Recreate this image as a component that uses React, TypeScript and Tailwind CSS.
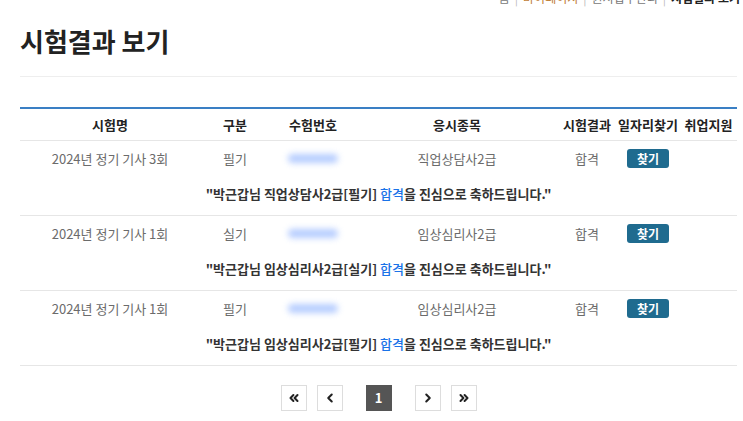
import React from 'react'
import { ChevronLeft, ChevronRight, ChevronsLeft, ChevronsRight } from 'lucide-react'

type Result = {
  round: string
  kind: string
  subject: string
  result: string
}

const results: Result[] = [
  { round: '2024년 정기 기사 3회', kind: '필기', subject: '직업상담사2급', result: '합격' },
  { round: '2024년 정기 기사 1회', kind: '실기', subject: '임상심리사2급', result: '합격' },
  { round: '2024년 정기 기사 1회', kind: '필기', subject: '임상심리사2급', result: '합격' },
]

const font = { fontFamily: '"Noto Sans CJK KR", "Noto Sans", sans-serif' }

function PageButton({ children, active }: { children: React.ReactNode; active?: boolean }) {
  return (
    <button
      className={`w-[26px] h-[26px] flex items-center justify-center text-[13px] font-bold ${
        active ? 'bg-[#555555] text-white' : 'bg-white border border-[#dddddd] text-[#222]'
      }`}
    >
      {children}
    </button>
  )
}

export default function App() {
  return (
    <div className="w-[743px] h-[421px] overflow-hidden bg-white pl-[20px] pr-[6px]" style={font}>
      {/* breadcrumb, cut off by the top edge */}
      <div className="flex justify-end -mt-[10px] h-[16px] text-[12px] leading-[16px] text-[#777] -mr-[3px]">
        <span>홈</span>
        <span className="mx-[5px] text-[#bbb]">|</span>
        <span className="text-[#c0803a]">마이페이지</span>
        <span className="mx-[5px] text-[#bbb]">|</span>
        <span>원서접수관리</span>
        <span className="mx-[5px] text-[#bbb]">|</span>
        <span className="text-[#222] font-bold">시험결과 보기</span>
      </div>

      <h1 className="mt-[18px] text-[26px] leading-[34px] font-bold text-[#222]">시험결과 보기</h1>

      <div className="mt-[18px] border-t border-[#eeeeee]" />

      <table className="mt-[30px] w-full table-fixed border-t-2 border-[#3a7fc4] text-[13px]">
        <colgroup>
          <col className="w-[180px]" />
          <col className="w-[70px]" />
          <col className="w-[86px]" />
          <col className="w-[202px]" />
          <col className="w-[58px]" />
          <col className="w-[64px]" />
          <col className="w-[57px]" />
        </colgroup>
        <thead>
          <tr className="h-[32px] border-b border-[#e6e6e6] text-[#222] font-bold">
            <th>시험명</th>
            <th>구분</th>
            <th>수험번호</th>
            <th>응시종목</th>
            <th className="whitespace-nowrap">시험결과</th>
            <th className="whitespace-nowrap">일자리찾기</th>
            <th className="whitespace-nowrap">취업지원</th>
          </tr>
        </thead>
        <tbody>
          {results.map((r, i) => (
            <React.Fragment key={i}>
              <tr className="h-[36px] text-[#6b6b6b] text-center">
                <td>{r.round}</td>
                <td>{r.kind}</td>
                <td>
                  <div className="mx-auto w-[50px] h-[9px] rounded-full bg-[#a3c0ff] blur-[3px] opacity-80" />
                </td>
                <td>{r.subject}</td>
                <td>{r.result}</td>
                <td>
                  <button className="w-[42px] h-[19px] rounded-[3px] bg-[#1f6b8f] text-white text-[12px] font-bold leading-[19px]">
                    찾기
                  </button>
                </td>
                <td />
              </tr>
              <tr className="h-[39px] border-b border-[#e6e6e6]">
                <td colSpan={7} className="text-center font-semibold text-[#333] pb-[4px]">
                  "박근갑님 {r.subject}[{r.kind}] <span className="text-[#1a73e8] font-medium">합격</span>을 진심으로 축하드립니다."
                </td>
              </tr>
            </React.Fragment>
          ))}
        </tbody>
      </table>

      <div className="mt-[19px] flex items-center justify-center">
        <div className="flex items-center gap-[10px]">
          <PageButton><ChevronsLeft size={14} strokeWidth={3.5} /></PageButton>
          <PageButton><ChevronLeft size={14} strokeWidth={3.5} /></PageButton>
        </div>
        <div className="mx-[23px]">
          <PageButton active>1</PageButton>
        </div>
        <div className="flex items-center gap-[10px]">
          <PageButton><ChevronRight size={14} strokeWidth={3.5} /></PageButton>
          <PageButton><ChevronsRight size={14} strokeWidth={3.5} /></PageButton>
        </div>
      </div>
    </div>
  )
}
